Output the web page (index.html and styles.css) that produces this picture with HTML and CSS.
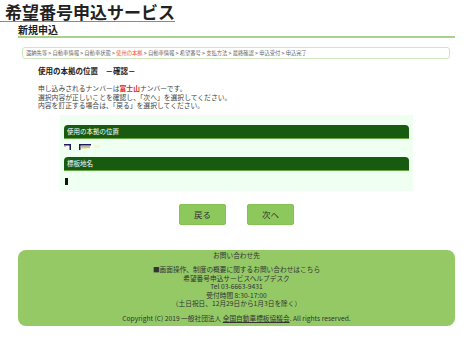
FILE: index.html
```html
<!DOCTYPE html>
<html lang="ja">
<head>
    <meta charset="UTF-8">
    <meta name="viewport" content="width=device-width, initial-scale=1.0">
    <title>希望番号申込サービス</title>
    <link rel="stylesheet" href="styles.css">
</head>
<body>
    <header class="site-head">
        <h1 class="site-title">希望番号申込サービス</h1>
        <div class="page-title">新規申込</div>
    </header>

    <nav class="steps">
        還納先等 &gt; 自動車情報 &gt; 自動車状態 &gt; <span class="current">使用の本拠</span> &gt; 自動車情報 &gt; 希望番号 &gt; 支払方法 &gt; 最終確認 &gt; 申込受付 &gt; 申込完了
    </nav>

    <main class="content">
        <h2 class="section-title">使用の本拠の位置　－確認－</h2>
        <p class="lead">
            申し込みされるナンバーは<span class="place">富士山</span>ナンバーです。<br>
            選択内容が正しいことを確認し、「次へ」を選択してください。<br>
            内容を訂正する場合は、「戻る」を選択してください。
        </p>

        <div class="panel">
            <div class="panel-head">使用の本拠の位置</div>
            <div class="panel-body">
                <!-- plate image (only the corner is visible) -->
                <svg class="plate" width="40" height="8" viewBox="0 0 40 8">
                    <rect x="0" y="0" width="7" height="1.5" fill="#23195a"/>
                    <rect x="5.5" y="0" width="1.5" height="6" fill="#23195a"/>
                    <rect x="0" y="1.5" width="2" height="1" fill="#c46aa0"/>
                    <rect x="15" y="0" width="12" height="1.5" fill="#23195a"/>
                    <rect x="15" y="0" width="1.5" height="6" fill="#23195a"/>
                    <rect x="17" y="2.5" width="9" height="1" fill="#8a7a50"/>
                    <rect x="17" y="3.5" width="6" height="1" fill="#e9d27a"/>
                    <rect x="30" y="1" width="6" height="3" fill="#fbf6c8"/>
                </svg>
            </div>
            <div class="panel-head">標板地名</div>
            <div class="panel-body panel-body-last">
                <span class="cursor"></span>
            </div>
        </div>

        <div class="actions">
            <button type="button" class="btn">戻る</button>
            <button type="button" class="btn">次へ</button>
        </div>
    </main>

    <footer class="site-foot">
        <p class="foot-title">お問い合わせ先</p>
        <p class="foot-info">
            ■画面操作、制度の概要に関するお問い合わせはこちら<br>
            希望番号申込サービスヘルプデスク<br>
            Tel 03-6663-9431<br>
            受付時間 8:30-17:00<br>
            （土日祝日、12月29日から1月3日を除く）
        </p>
        <p class="copyright">Copyright (C) 2019 一般社団法人 <a href="#">全国自動車標板協議会</a>. All rights reserved.</p>
    </footer>
</body>
</html>
```

FILE: styles.css
```css
body {
    margin: 0;
    font-family: "Noto Sans CJK JP", sans-serif;
    color: #333;
    background-color: #fff;
}

/* Header */
.site-title {
    display: inline-block;
    margin: 0;
    padding: 1px 0 0 5px;
    font-size: 17px;
    line-height: 19px;
    font-weight: bold;
    color: #222;
    border-bottom: 1px solid #8a8a8a;
}

.page-title {
    margin: 0 19px 0 18px;
    padding: 1px 0 1px;
    font-size: 10px;
    line-height: 10px;
    font-weight: bold;
    color: #222;
    border-bottom: 2px solid #a9d18e;
}

/* Breadcrumb */
.steps {
    margin: 9px 24px 0 22px;
    padding-left: 3px;
    height: 10px;
    font-size: 5.3px;
    line-height: 10px;
    color: #666;
    border: 1px solid #cfe6c0;
    border-radius: 3px;
    white-space: nowrap;
}

.steps .current {
    color: #e8593b;
}

/* Main */
.content {
    margin: 0 19px 0 18px;
}

.section-title {
    margin: 7px 0 0 20px;
    font-size: 7.5px;
    line-height: 10px;
    font-weight: bold;
    color: #222;
}

.lead {
    margin: 8px 0 0 20px;
    font-size: 6.8px;
    line-height: 8.5px;
    color: #444;
}

.place {
    color: #e0201a;
    font-weight: bold;
}

.panel {
    width: 353px;
    margin: 5px auto 0;
    padding: 10px 4px 6px;
    box-sizing: border-box;
    background-color: #effff2;
}

.panel-head {
    padding-left: 3px;
    font-size: 6.5px;
    line-height: 13px;
    color: #fff;
    background-color: #185a10;
    border-bottom: 1px solid #66a843;
    border-radius: 4px 4px 0 0;
}

.panel-body {
    height: 18px;
    padding-top: 5px;
    box-sizing: border-box;
}

.panel-body-last {
    height: 14px;
    padding-top: 7px;
}

.plate {
    display: block;
}

.cursor {
    display: block;
    width: 3px;
    height: 7px;
    margin-left: 1px;
    background-color: #111;
}

.actions {
    display: flex;
    justify-content: center;
    gap: 21px;
    margin-top: 13px;
}

.btn {
    width: 47px;
    height: 21px;
    padding: 0;
    font-family: inherit;
    font-size: 8.5px;
    color: #333;
    background-color: #8dc85c;
    border: 1px solid #85c052;
    border-radius: 2px;
    cursor: pointer;
}

/* Footer */
.site-foot {
    margin: 25px 19px 0 18px;
    padding: 1px 0 4px;
    text-align: center;
    font-size: 6.7px;
    line-height: 8.5px;
    color: #333;
    background-color: #94c966;
    border-radius: 8px;
}

.site-foot p {
    margin: 0;
}

.foot-info {
    margin-top: 6px !important;
}

.copyright {
    margin-top: 6px !important;
}

.copyright a {
    color: #333;
}
```
